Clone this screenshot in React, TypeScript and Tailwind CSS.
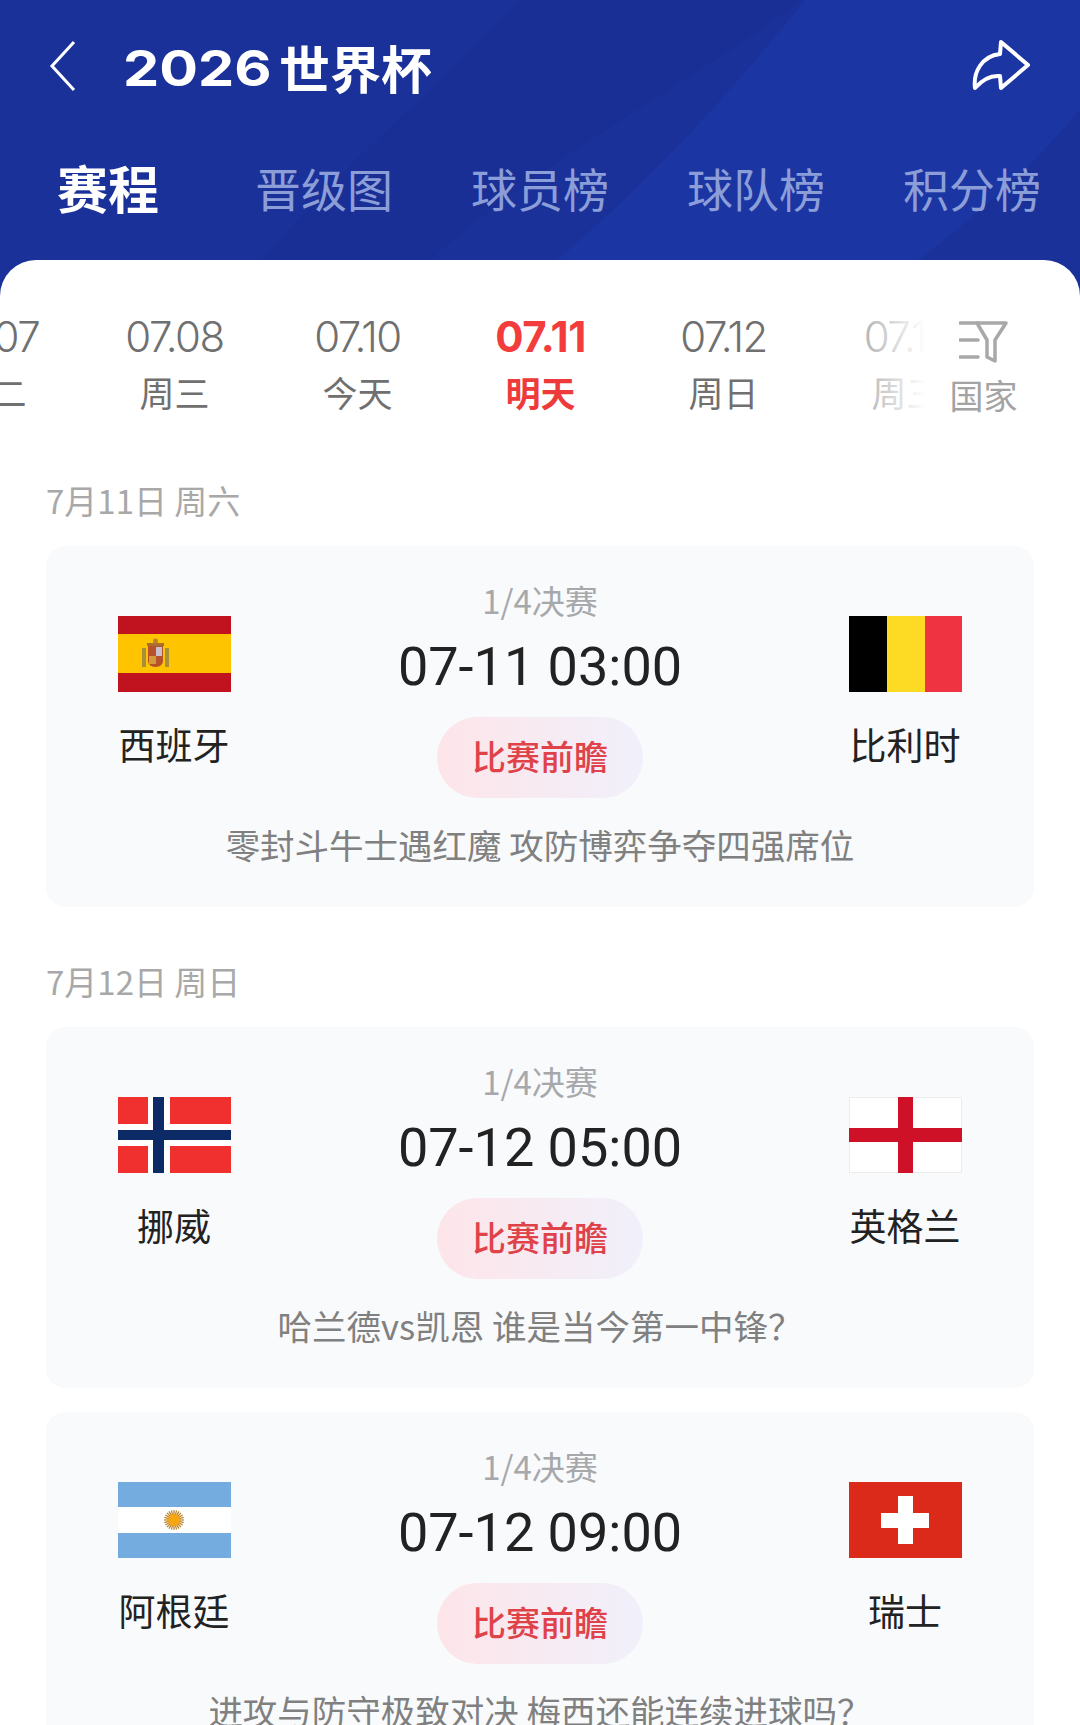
const cjk = "font-['Noto_Sans_CJK_SC','Noto_Sans',sans-serif]";

const tabs = ["晋级图", "球员榜", "球队榜", "积分榜"];

const dates = [
  { day: "07.07", label: "周二" },
  { day: "07.08", label: "周三" },
  { day: "07.10", label: "今天" },
  { day: "07.11", label: "明天", active: true },
  { day: "07.12", label: "周日" },
  { day: "07.15", label: "周三" },
];

function SpainFlag() {
  return (
    <svg viewBox="0 0 113 76" className="h-[76px] w-[113px]">
      <rect width="113" height="76" fill="#c1121f" />
      <rect y="18" width="113" height="39" fill="#ffc400" />
      <rect x="24" y="32" width="4" height="19" fill="#a88f3a" />
      <rect x="47" y="32" width="4" height="19" fill="#a88f3a" />
      <path d="M29 27h17v3H29z" fill="#a8702a" />
      <path d="M30 30h15v15c0 3-3 6-7.500 6S30 48 30 45z" fill="#b5522a" />
      <rect x="38" y="31" width="6" height="9" fill="#c9bfd0" />
      <rect x="31" y="40" width="7" height="8" fill="#d49a3a" />
      <circle cx="37.500" cy="25" r="2.500" fill="#b5832f" />
    </svg>
  );
}

function BelgiumFlag() {
  return (
    <svg viewBox="0 0 113 76" className="h-[76px] w-[113px]">
      <rect width="38" height="76" fill="#000" />
      <rect x="38" width="38" height="76" fill="#fdda24" />
      <rect x="76" width="37" height="76" fill="#ef3340" />
    </svg>
  );
}

function NorwayFlag() {
  return (
    <svg viewBox="0 0 113 76" className="h-[76px] w-[113px]">
      <rect width="113" height="76" fill="#f0302f" />
      <rect x="30" width="22" height="76" fill="#fff" />
      <rect y="27" width="113" height="22" fill="#fff" />
      <rect x="35" width="11" height="76" fill="#0b2a66" />
      <rect y="33" width="113" height="10" fill="#0b2a66" />
    </svg>
  );
}

function EnglandFlag() {
  return (
    <svg viewBox="0 0 113 76" className="h-[76px] w-[113px]">
      <rect x="0.500" y="0.500" width="112" height="75" fill="#fff" stroke="#ececec" />
      <rect x="49" width="15" height="76" fill="#ce1126" />
      <rect y="31" width="113" height="14" fill="#ce1126" />
    </svg>
  );
}

function ArgentinaFlag() {
  const rays = Array.from({ length: 24 }, (_, i) => (i * 360) / 24);
  return (
    <svg viewBox="0 0 113 76" className="h-[76px] w-[113px]">
      <rect width="113" height="76" fill="#74acdf" />
      <rect y="25" width="113" height="26" fill="#fff" />
      {rays.map((deg) => (
        <line
          key={deg}
          x1="56"
          y1="38"
          x2="56"
          y2="28"
          stroke="#b97f26"
          strokeWidth="1.200"
          transform={`rotate(${deg} 56 38)`}
        />
      ))}
      <circle cx="56" cy="38" r="6" fill="#f6a70f" />
    </svg>
  );
}

function SwissFlag() {
  return (
    <svg viewBox="0 0 113 76" className="h-[76px] w-[113px]">
      <rect width="113" height="76" fill="#dc2a1a" />
      <rect x="49" y="14" width="15" height="48" fill="#fff" />
      <rect x="32" y="31" width="48" height="15" fill="#fff" />
    </svg>
  );
}

type Match = {
  home: string;
  away: string;
  homeFlag: React.ReactNode;
  awayFlag: React.ReactNode;
  time: string;
  desc: string;
};

function MatchCard({ match }: { match: Match }) {
  return (
    <div className="shrink-0 rounded-[20px] bg-[#f9fafc] pb-[39px]">
      <div className="flex">
        <div className="flex w-[258px] flex-col items-center pt-[70px] pr-[2px]">
          {match.homeFlag}
          <span className="mt-[28px] text-[37px] leading-[48px] text-[#222]">{match.home}</span>
        </div>
        <div className="flex flex-1 flex-col items-center pt-[31px]">
          <span className="text-[33px] leading-[46px] text-[#a6a8ab]">1/4决赛</span>
          <span className="mt-[14px] font-['Roboto',sans-serif] text-[54px] leading-[60px] text-[#222]">
            {match.time}
          </span>
          <div className="mt-[20px] flex h-[81px] w-[206px] items-center justify-center rounded-full bg-gradient-to-r from-[#fde5e9] to-[#f0f0fb] pb-[4px] text-[34px] font-medium text-[#e0424a]">
            比赛前瞻
          </div>
        </div>
        <div className="flex w-[258px] flex-col items-center pt-[70px]">
          {match.awayFlag}
          <span className="mt-[28px] text-[37px] leading-[48px] text-[#222]">{match.away}</span>
        </div>
      </div>
      <p className="mt-[22px] text-center text-[34.5px] leading-[48px] text-[#808080]">{match.desc}</p>
    </div>
  );
}

export default function App() {
  return (
    <div className={`flex h-[1725px] w-[1080px] flex-col overflow-hidden bg-[#18309a] ${cjk}`}>
      <header className="relative h-[260px] shrink-0">
        <svg viewBox="0 0 1080 290" className="absolute inset-0 h-[290px] w-[1080px]">
          <rect width="1080" height="290" fill="#1a3199" />
          <path d="M520 0H800C730 60 500 180 400 290H240C330 170 440 90 520 0Z" fill="#192f95" />
          <path d="M805 0H1080V290H520C620 210 700 130 805 0Z" fill="#1b35a3" />
          <path d="M1080 110V290H880C960 230 1030 170 1080 110Z" fill="#1a3199" />
        </svg>
        <div className="relative flex h-[132px] items-center pr-[46px] pl-[49px]">
          <svg viewBox="0 0 28 52" className="h-[52px] w-[28px]" fill="none">
            <path d="M25 2 3 26l22 24" stroke="#fff" strokeWidth="3" />
          </svg>
          <h1 className="ml-[46px] flex items-center pt-[3px] text-white">
            <span className="inline-block w-[150px] origin-left scale-x-[1.15] font-['Inter',sans-serif] text-[50px] leading-none font-bold">
              2026
            </span>
            <span className="ml-[6px] text-[51px] leading-none font-bold">世界杯</span>
          </h1>
          <svg viewBox="0 0 64 60" className="ml-auto h-[60px] w-[64px]" fill="none">
            <path
              d="M31 6 58 29 31 52 30 40C20 39 12 44 5 52 3 36 12 20 30 18Z"
              stroke="#fff"
              strokeWidth="4"
              strokeLinejoin="round"
            />
          </svg>
        </div>
        <nav className="relative grid h-[110px] grid-cols-5 items-center">
          <span className="text-center text-[51px] leading-none font-bold text-white">赛程</span>
          {tabs.map((tab) => (
            <span key={tab} className="text-center text-[46px] leading-none text-[#8c9ed8]">
              {tab}
            </span>
          ))}
        </nav>
      </header>

      <main className="relative flex-1 rounded-t-[36px] bg-white px-[46px]">
        <div className="-mx-[46px] flex h-[220px] pt-[52px]">
          <div className="relative h-[110px] w-[925px] shrink-0 overflow-hidden">
            <div className="-ml-[100px] flex">
              {dates.map((d) => (
                <div key={d.day} className="flex w-[183px] shrink-0 flex-col items-center">
                  <span
                    className={
                      d.active
                        ? "font-['Inter',sans-serif] text-[42px] leading-[50px] font-bold tracking-[-0.5px] text-[#f33d3d]"
                        : "font-['Inter',sans-serif] text-[42px] leading-[50px] font-light tracking-[-1.5px] text-[#707070]"
                    }
                  >
                    {d.day}
                  </span>
                  <span
                    className={
                      d.active
                        ? "mt-[8px] text-[35px] leading-[44px] font-bold text-[#ee3a3a]"
                        : "mt-[8px] text-[35px] leading-[44px] text-[#707070]"
                    }
                  >
                    {d.label}
                  </span>
                </div>
              ))}
            </div>
            <div className="absolute top-0 right-0 h-full w-[70px] bg-gradient-to-r from-white/40 to-white" />
          </div>
          <div className="flex flex-1 flex-col items-center pr-[38px]">
            <svg viewBox="0 0 50 42" className="mt-[9px] h-[42px] w-[50px]" fill="none" stroke="#a8a8a8" strokeWidth="3.500" strokeLinecap="round" strokeLinejoin="round">
              <path d="M1 2h18M1 19h18M1 36h18" />
              <path d="M18 2h29L36 19v21l-8-4V19Z" />
            </svg>
            <span className="mt-[10px] text-[34px] leading-[44px] text-[#a3a3a3]">国家</span>
          </div>
        </div>

        <h2 className="mb-[26px] text-[33px] leading-[40px] font-normal text-[#a8a8a8]">7月11日 周六</h2>
        <MatchCard
          match={{
            home: "西班牙",
            away: "比利时",
            homeFlag: <SpainFlag />,
            awayFlag: <BelgiumFlag />,
            time: "07-11 03:00",
            desc: "零封斗牛士遇红魔 攻防博弈争夺四强席位",
          }}
        />

        <h2 className="mt-[54px] mb-[26px] text-[33px] leading-[40px] font-normal text-[#a8a8a8]">7月12日 周日</h2>
        <div className="flex flex-col gap-[24px]">
          <MatchCard
            match={{
              home: "挪威",
              away: "英格兰",
              homeFlag: <NorwayFlag />,
              awayFlag: <EnglandFlag />,
              time: "07-12 05:00",
              desc: "哈兰德vs凯恩 谁是当今第一中锋？",
            }}
          />
          <MatchCard
            match={{
              home: "阿根廷",
              away: "瑞士",
              homeFlag: <ArgentinaFlag />,
              awayFlag: <SwissFlag />,
              time: "07-12 09:00",
              desc: "进攻与防守极致对决 梅西还能连续进球吗？",
            }}
          />
        </div>
      </main>
    </div>
  );
}
